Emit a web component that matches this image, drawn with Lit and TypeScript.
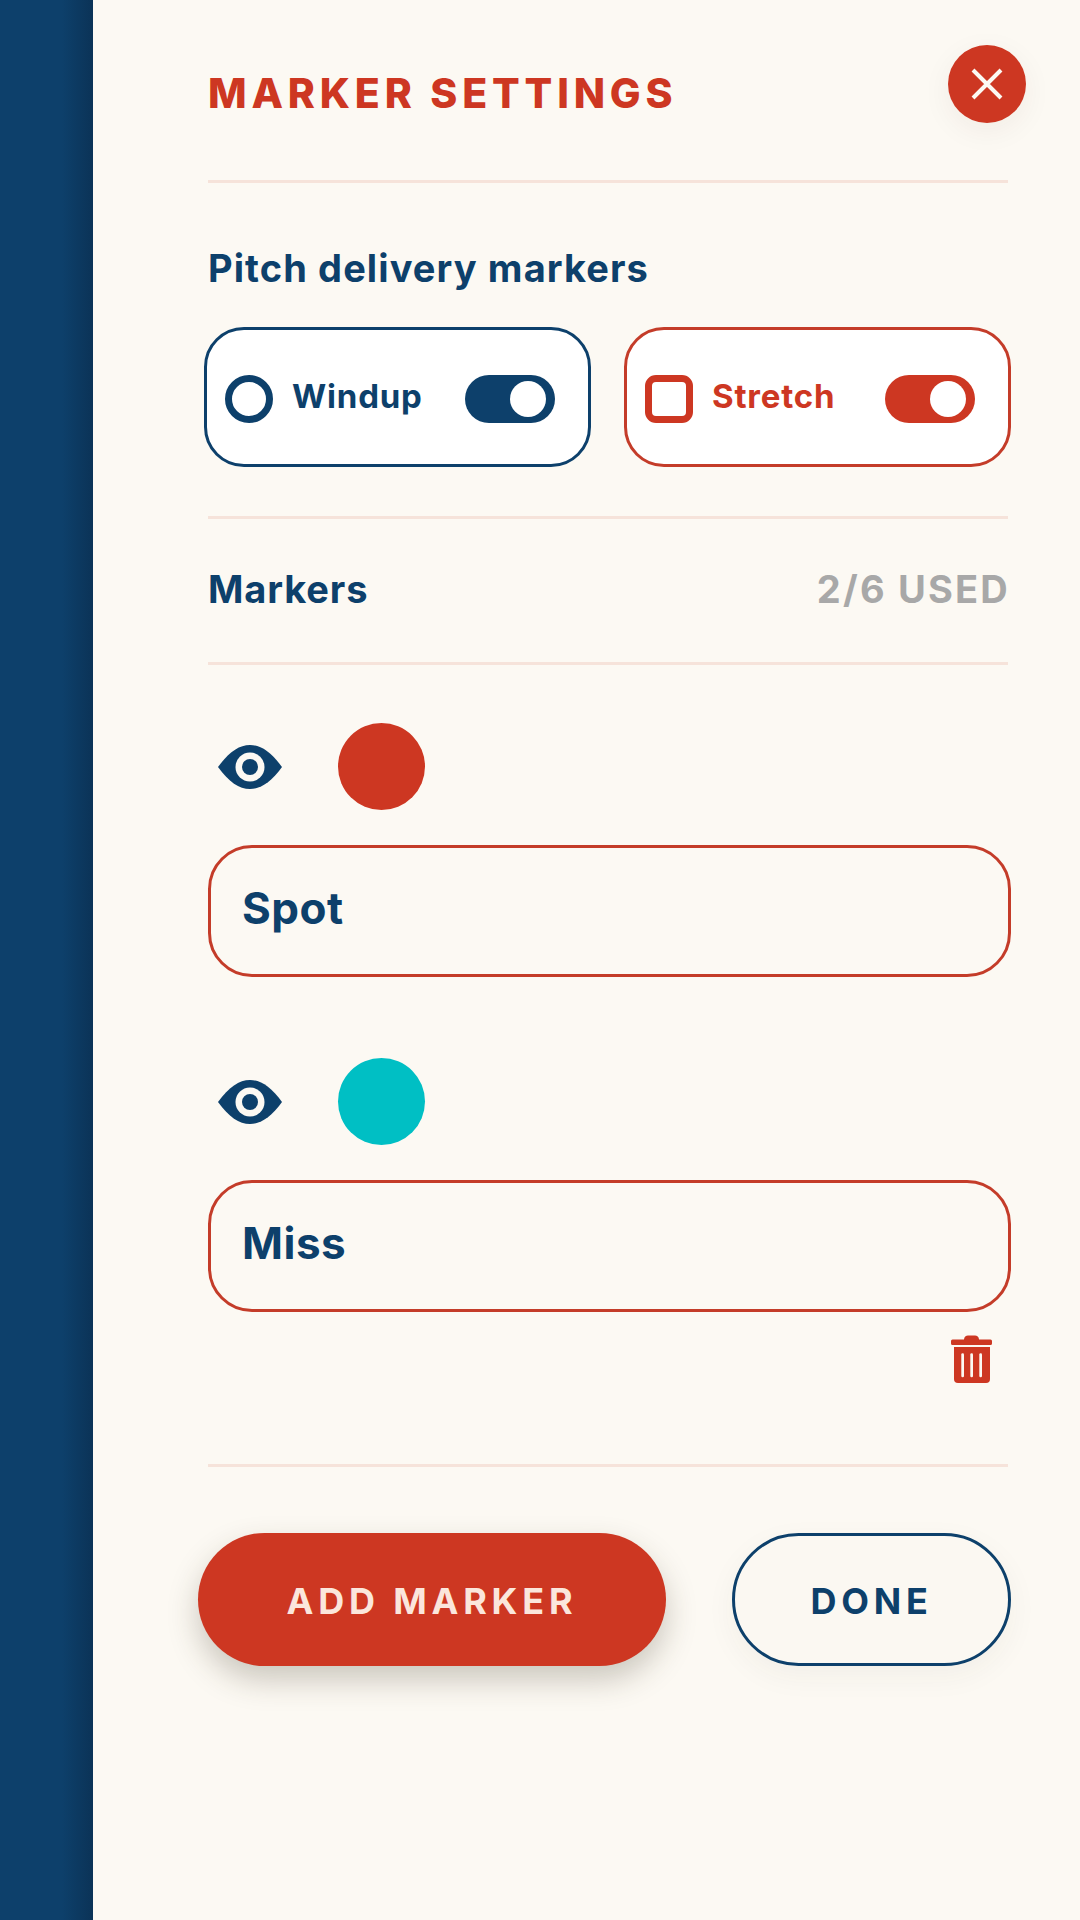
import { LitElement, html, css, svg } from "lit";
import { customElement } from "lit/decorators.js";

interface Marker {
  name: string;
  color: string;
  removable?: boolean;
}

const MARKERS: Marker[] = [
  { name: "Spot", color: "#cd3722" },
  { name: "Miss", color: "#00bfc4", removable: true },
];

const eyeIcon = svg`
  <path fill="#0d406b" d="M0 22C11 7 21 0 32 0s21 7 32 22C53 37 43 44 32 44S11 37 0 22Z" />
  <circle cx="32" cy="22" r="14.5" fill="#fcf9f3" />
  <circle cx="32" cy="22" r="8" fill="#0d406b" />
`;

const trashIcon = svg`
  <path fill="#cd3722" d="M13 4.500C13 2 15 .5 17 .5h7c2 0 4 1.500 4 4h11.500a1.500 1.500 0 0 1 1.500 1.500v2.500a1.500 1.500 0 0 1-1.500 1.500H1.500A1.500 1.500 0 0 1 0 8.500V6a1.500 1.500 0 0 1 1.500-1.500Z" />
  <path fill="#cd3722" d="M3 12h36v32a4 4 0 0 1-4 4H7a4 4 0 0 1-4-4Z" />
  <rect x="10.300" y="18.300" width="2.700" height="24" rx="1.300" fill="#fcf9f3" />
  <rect x="19.300" y="18.300" width="2.700" height="24" rx="1.300" fill="#fcf9f3" />
  <rect x="28.300" y="18.300" width="2.700" height="24" rx="1.300" fill="#fcf9f3" />
`;

@customElement("app-root")
export class AppRoot extends LitElement {
  private _renderDelivery(label: string, variant: "navy" | "red") {
    return html`
      <div class="delivery ${variant}">
        <span class="shape"></span>
        <span class="delivery-label">${label}</span>
        <span class="toggle"><span class="knob"></span></span>
      </div>
    `;
  }

  private _renderMarker(marker: Marker) {
    return html`
      <div class="marker">
        <div class="marker-top">
          <svg class="eye" viewBox="0 0 64 44" width="64" height="44">${eyeIcon}</svg>
          <span class="swatch" style="background:${marker.color}"></span>
        </div>
        <div class="name-field">${marker.name}</div>
        ${marker.removable
          ? html`<div class="marker-actions">
              <svg viewBox="0 0 41 48" width="41" height="48">${trashIcon}</svg>
            </div>`
          : ""}
      </div>
    `;
  }

  protected render() {
    return html`
      <aside class="rail"></aside>
      <main class="panel">
        <button class="close" aria-label="Close">
          <svg viewBox="0 0 32 32" width="32" height="32">
            <path d="M2 2 30 30M30 2 2 30" stroke="#fcf9f3" stroke-width="4" fill="none" />
          </svg>
        </button>

        <h1 class="title">MARKER SETTINGS</h1>
        <hr />

        <h2 class="subtitle">Pitch delivery markers</h2>
        <div class="deliveries">
          ${this._renderDelivery("Windup", "navy")}
          ${this._renderDelivery("Stretch", "red")}
        </div>
        <hr class="after-deliveries" />

        <div class="markers-head">
          <span class="subtitle-inline">Markers</span>
          <span class="used">2/6 USED</span>
        </div>
        <hr />

        <div class="marker-list">${MARKERS.map((m) => this._renderMarker(m))}</div>
        <hr class="after-markers" />

        <div class="actions">
          <button class="btn primary">ADD MARKER</button>
          <button class="btn secondary">DONE</button>
        </div>
      </main>
    `;
  }

  static styles = css`
    :host {
      display: flex;
      width: 1080px;
      height: 1920px;
      overflow: hidden;
      font-family: "Inter", "Open Sans", sans-serif;
      color: #0d406b;
      background: #fcf9f3;
    }

    .rail {
      flex: 0 0 93px;
      background: linear-gradient(90deg, #0d406b 0, #0d406b 62px, #0b3357 93px);
    }

    .panel {
      position: relative;
      flex: 1;
      box-sizing: border-box;
      padding: 0 72px 0 115px;
    }

    hr {
      height: 3px;
      margin: 0;
      border: 0;
      background: #f6e3da;
    }

    .close {
      position: absolute;
      top: 45px;
      left: 855px;
      width: 78px;
      height: 78px;
      display: flex;
      align-items: center;
      justify-content: center;
      padding: 0;
      border: 0;
      border-radius: 50%;
      background: #cd3722;
      box-shadow: 0 8px 30px rgba(60, 40, 20, 0.06);
    }

    .title {
      height: 180px;
      margin: 0;
      box-sizing: border-box;
      padding-top: 70px;
      font-size: 41px;
      line-height: 46px;
      font-weight: 800;
      letter-spacing: 4.800px;
      color: #cd3722;
    }

    .subtitle {
      margin: 0;
      padding-top: 62px;
      font-size: 38px;
      line-height: 46px;
      font-weight: 700;
      letter-spacing: 1.100px;
    }

    .deliveries {
      display: flex;
      gap: 33px;
      margin: 36px -3px 0 -4px;
    }

    .delivery {
      flex: 1;
      height: 140px;
      box-sizing: border-box;
      display: flex;
      align-items: center;
      padding: 4px 33px 0 18px;
      border: 3px solid;
      border-radius: 40px;
      background: #fff;
    }

    .delivery.navy {
      color: #0d406b;
    }

    .delivery.red {
      color: #cd3722;
      border-color: #c43c29;
    }

    .shape {
      flex: 0 0 48px;
      height: 48px;
      box-sizing: border-box;
      border: 7px solid currentColor;
    }

    .navy .shape {
      border-radius: 50%;
    }

    .red .shape {
      border-radius: 11px;
    }

    .delivery-label {
      flex: 1;
      margin: -6px 0 0 19px;
      font-size: 33px;
      line-height: 40px;
      font-weight: 700;
      letter-spacing: 0.8px;
    }

    .toggle {
      flex: 0 0 90px;
      height: 48px;
      box-sizing: border-box;
      display: flex;
      justify-content: flex-end;
      align-items: center;
      padding-right: 9px;
      border-radius: 24px;
      background: currentColor;
    }

    .knob {
      width: 36px;
      height: 36px;
      border-radius: 50%;
      background: #fff;
    }

    .after-deliveries {
      margin-top: 49px;
    }

    .markers-head {
      display: flex;
      justify-content: space-between;
      align-items: center;
      height: 143px;
      padding-bottom: 4px;
      box-sizing: border-box;
      font-size: 38px;
      font-weight: 700;
      letter-spacing: 0.9px;
    }

    .used {
      color: #a8a8a8;
      letter-spacing: 2.200px;
      margin-right: -2px;
    }

    .marker-list {
      display: flex;
      flex-direction: column;
      gap: 81px;
      padding-top: 58px;
    }

    .marker-top {
      display: flex;
      align-items: center;
      gap: 56px;
      padding-left: 10px;
      margin-bottom: 35px;
    }

    .eye {
      display: block;
    }

    .swatch {
      width: 87px;
      height: 87px;
      border-radius: 50%;
    }

    .name-field {
      height: 132px;
      box-sizing: border-box;
      margin-right: -3px;
      padding: 0 0 6px 31px;
      display: flex;
      align-items: center;
      border: 3px solid #c43c29;
      border-radius: 44px;
      font-size: 44px;
      font-weight: 700;
      letter-spacing: 0.5px;
    }

    .marker-actions {
      display: flex;
      justify-content: flex-end;
      padding: 23px 16px 0 0;
    }

    .marker-actions svg {
      display: block;
    }

    .after-markers {
      margin-top: 81px;
    }

    .actions {
      display: flex;
      gap: 66px;
      margin: 66px -3px 0 -10px;
    }

    .btn {
      height: 133px;
      box-sizing: border-box;
      padding: 2px 0 0;
      border-radius: 67px;
      font-family: inherit;
      font-size: 36px;
      font-weight: 700;
      letter-spacing: 4.800px;
    }

    .primary {
      flex: 0 0 468px;
      border: 0;
      background: #cd3722;
      color: #fbe6dc;
      box-shadow: 0 14px 30px rgba(60, 50, 30, 0.25);
    }

    .secondary {
      flex: 1;
      border: 3px solid #0d406b;
      background: #fbf8f2;
      color: #0d406b;
      box-shadow: 0 10px 30px rgba(60, 50, 30, 0.05);
    }
  `;
}
